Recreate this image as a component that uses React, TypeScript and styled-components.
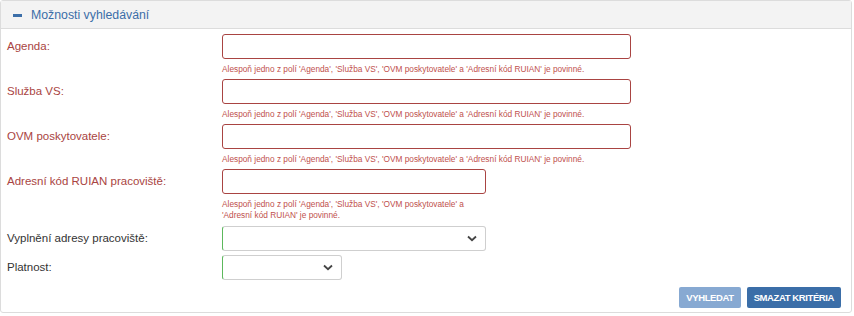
import { ReactElement } from 'react';
import styled, { createGlobalStyle } from 'styled-components';

const GlobalStyle = createGlobalStyle`
  body {
    margin: 0;
    font-family: 'Liberation Sans', Arial, sans-serif;
    background: #fff;
  }
`;

const Panel = styled.div`
  margin: 0 2px 0 0;
  border: 1px solid #dcdcdc;
  border-radius: 3px;
  height: 313px;
  box-sizing: border-box;
  display: flex;
  flex-direction: column;
`;

const PanelHeader = styled.div`
  display: flex;
  align-items: center;
  gap: 9px;
  height: 27px;
  padding: 0 12px;
  background: #f3f3f3;
  border-bottom: 1px solid #dcdcdc;
  color: #3b6ea8;
  font-size: 12.3px;
`;

const Minus = styled.span`
  display: inline-block;
  width: 9px;
  height: 3px;
  background: #3b6ea8;
  margin-top: 1px;
`;

const Body = styled.div`
  padding: 5px 6px 0 6px;
  display: flex;
  flex-direction: column;
  flex: 1;
`;

const Row = styled.div<{ $gap: number }>`
  display: grid;
  grid-template-columns: 215px 1fr;
  margin-bottom: ${(p) => p.$gap}px;
`;

const Label = styled.label<{ $error?: boolean }>`
  font-size: 11.5px;
  color: ${(p) => (p.$error ? '#a94442' : '#333')};
  padding-top: 6px;
`;

const Field = styled.div`
  display: flex;
  flex-direction: column;
`;

const TextInput = styled.input<{ $width: number }>`
  width: ${(p) => p.$width}px;
  height: 25px;
  box-sizing: border-box;
  border: 1px solid #a94442;
  border-radius: 3px;
  padding: 2px 6px;
  outline: none;
  font-family: inherit;
`;

const Help = styled.div<{ $width: number }>`
  width: ${(p) => p.$width}px;
  margin-top: 5px;
  font-size: 8.3px;
  line-height: 11px;
  color: #c0504d;
`;

const SelectWrap = styled.div<{ $width: number }>`
  position: relative;
  width: ${(p) => p.$width}px;
  height: 25px;
  box-sizing: border-box;
  border: 1px solid #cfcfcf;
  border-left: 1px solid #5cb85c;
  border-radius: 3px;
  svg {
    position: absolute;
    right: 8px;
    top: 8px;
  }
`;

const Select = styled.select`
  appearance: none;
  width: 100%;
  height: 100%;
  border: none;
  background: transparent;
  outline: none;
`;

const Actions = styled.div`
  margin-top: auto;
  display: flex;
  justify-content: flex-end;
  gap: 6px;
  padding: 0 4px 4px 0;
`;

const Button = styled.button<{ $disabled?: boolean }>`
  height: 21px;
  padding: 0 7px;
  border: none;
  border-radius: 2px;
  font-family: 'Liberation Sans', Arial, sans-serif;
  font-size: 9.5px;
  font-weight: bold;
  letter-spacing: -0.4px;
  color: #fff;
  background: ${(p) => (p.$disabled ? '#87a9d2' : '#3b6ea8')};
`;

const HELP = "Alespoň jedno z polí 'Agenda', 'Služba VS', 'OVM poskytovatele' a 'Adresní kód RUIAN' je povinné.";

const Chevron = (): ReactElement => (
  <svg width="10" height="7" viewBox="0 0 10 7">
    <path d="M1 1.5 L5 5.2 L9 1.5" fill="none" stroke="#444" strokeWidth="1.8" />
  </svg>
);

const fields = [
  { label: 'Agenda:', width: 409, gap: 4 },
  { label: 'Služba VS:', width: 409, gap: 4 },
  { label: 'OVM poskytovatele:', width: 409, gap: 4 },
  { label: 'Adresní kód RUIAN pracoviště:', width: 264, gap: 5 },
];

const App = (): ReactElement => (
  <>
    <GlobalStyle />
    <Panel>
      <PanelHeader>
        <Minus />
        Možnosti vyhledávání
      </PanelHeader>
      <Body>
        {fields.map((f) => (
          <Row key={f.label} $gap={f.gap}>
            <Label $error>{f.label}</Label>
            <Field>
              <TextInput $width={f.width} />
              <Help $width={f.width}>{HELP}</Help>
            </Field>
          </Row>
        ))}
        <Row $gap={4}>
          <Label>Vyplnění adresy pracoviště:</Label>
          <SelectWrap $width={264}>
            <Select />
            <Chevron />
          </SelectWrap>
        </Row>
        <Row $gap={0}>
          <Label>Platnost:</Label>
          <SelectWrap $width={120}>
            <Select />
            <Chevron />
          </SelectWrap>
        </Row>
        <Actions>
          <Button $disabled>VYHLEDAT</Button>
          <Button>SMAZAT KRITÉRIA</Button>
        </Actions>
      </Body>
    </Panel>
  </>
);

export default App;
